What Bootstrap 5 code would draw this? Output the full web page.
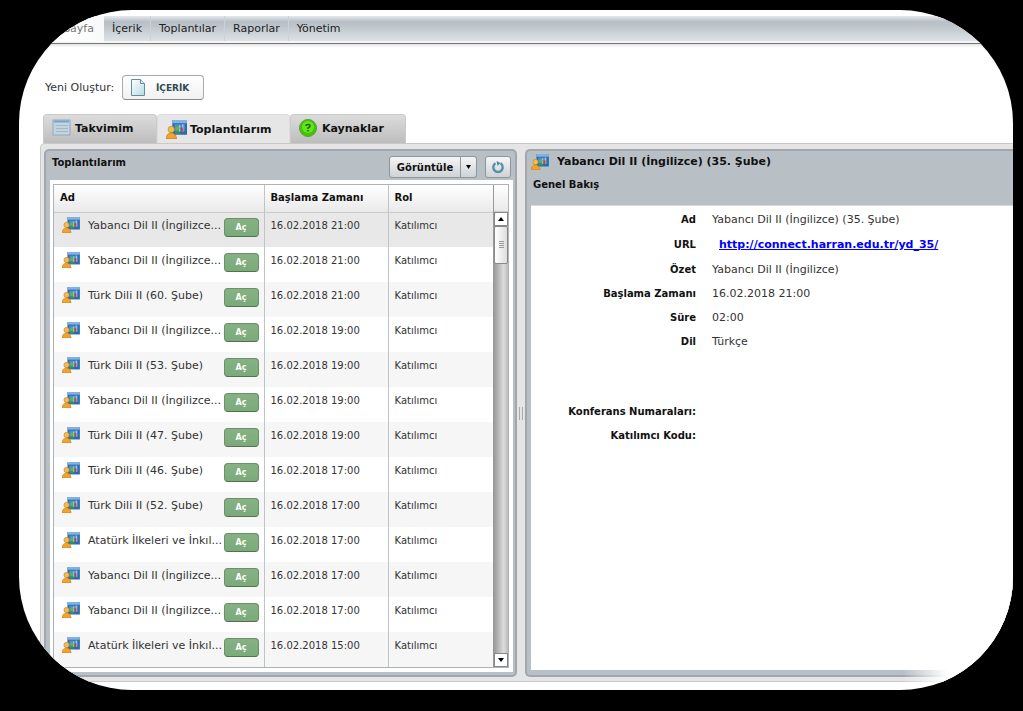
<!DOCTYPE html>
<html lang="tr">
<head>
<meta charset="utf-8">
<meta name="viewport" content="width=device-width, initial-scale=1">
<title>Toplantılarım</title>
<link href="https://cdn.jsdelivr.net/npm/bootstrap@5.3.0/dist/css/bootstrap.min.css" rel="stylesheet">
<style>
body{background:#000;font-family:Verdana,"DejaVu Sans",sans-serif;font-size:10px;line-height:16px;color:#333}
.frame{margin:10px 10px 20px 19px;border-radius:113px;background:#fff;overflow:hidden;padding-top:6px;padding-bottom:8px}
.topbar{height:28px;background:linear-gradient(#e6eaed,#b9c1c8 20%,#bcc4ca 35%,#dfe4e7 95%);border-bottom:1px solid #777;box-shadow:inset 0 -2px #f4f6f7,0 2px 2px #e6e6e6}
.topbar a{color:#222;text-decoration:none;font-size:11px;line-height:25px;padding:0 8px;border-right:1px solid #ccd2d6}
.topbar a.active{width:85px;background:linear-gradient(90deg,#fff 60%,#f8f9f9);text-align:right;padding-right:10px;color:#777;border:0}
.topbar a:last-child{border:0}
.create{padding:31px 26px 14px;font-size:11px;gap:8px}
.btn-create{width:82px;height:25px;padding:0 14px 0 8px;border:1px solid #aaa;border-bottom-color:#888;border-radius:4px;background:linear-gradient(#fff,#f1f1f1);font:bold 9px "DejaVu Sans",sans-serif;color:#2a4c55}
.tabs{margin-left:24px;height:29px}
.tabs button{height:29px;border:1px solid #cacaca;border-bottom:0;border-radius:4px 4px 0 0;background:linear-gradient(#dcdcdc,#bdbdbd);font:bold 11px "DejaVu Sans",sans-serif;color:#111;padding:0 0 2px 8px;gap:3px}
.tabs button.active{background:#e6e6e6;border-color:#ddd;padding-bottom:0}
.workspace{margin-left:21px;background:#e5e5e5;border:1px solid #c9c9c9;border-right:0;border-radius:5px 0 0 5px;padding:5px 0 4px 3px}
.pane{background:#b8c0c6;border:2px solid #a1a7ac;font-size:10px;color:#111}
.pane-list{width:473px;flex:none;border-radius:5px;padding:0 2px 3px 4px}
.pane-info{border-right:0;border-radius:5px 0 0 5px;padding:0 0 5px 4px;position:relative}
.pane-info::after{content:"";position:absolute;right:0;bottom:-8px;width:110px;height:15px;background:linear-gradient(90deg,transparent,#fff 40%)}
.pane h2{font-size:11px;line-height:16px;font-weight:bold;margin:0}
.pane .list-head h2{font-size:10px}
.list-head{height:29px;padding:1px 2px 0 2px}
.btn-pane{height:22px;border:1px solid #8f969b;border-radius:3px;background:linear-gradient(#f5f5f5,#cfd3d6);color:#111;font:bold 10px "DejaVu Sans",sans-serif;padding:0}
.listbox{background:#fff;padding:4px 4px 4px 3px}
.gridbox{border:1px solid #adb4b9}
.meetings{table-layout:fixed;margin:0;font-size:10px;color:#333;width:100%;border-collapse:collapse}
.meetings th{height:27px;padding:0 6px;background:linear-gradient(#fff,#e9e9e9);font-size:10px;color:#111;border-bottom:1px solid #ccc;vertical-align:middle}
.meetings th+th,.meetings td+td{border-left:1px solid #bfc4c7}
.meetings td{height:35px;padding:0 6px 8px;vertical-align:middle;white-space:nowrap}
.meetings tr:nth-child(odd) td{background:#f6f6f6}
.meetings tr:first-child td{background:#e8e8e8}
.meetings td:first-child{padding:0 5px 0 8px}
.meetings .title{width:136px;margin:0 0 8px 8px;font-size:11px}
.meetings .ic{margin-bottom:10px}
.btn-open{width:35px;height:19px;border:1px solid #6c8f6c;border-bottom-color:#54704f;border-radius:4px;background:linear-gradient(#86b184,#7bab7a);color:#fff;font:bold 8px/15px "DejaVu Sans",sans-serif;padding:0;margin-bottom:4px}
.scroller{width:15px;flex:none;border-left:1px solid #999}
.scroll-top{height:27px;background:linear-gradient(#fff,#e9e9e9);border-bottom:1px solid #ccc}
.scroll-track{background:linear-gradient(90deg,#999,#ddd 70%,#bbb)}
.scroller button{height:14px;width:100%;padding:0;border:1px solid #888;background:#fff;line-height:0}
.scroller .thumb{height:38px;border-radius:2px;background:linear-gradient(90deg,#fff,#ddd)}
.splitter{width:8px;flex:none}
.splitter span{width:4px;height:13px;border:solid #aaa;border-width:0 1px}
.info-head{padding:3px 0 0;height:54px}
.info-head .sub-title{font-size:10px;padding-left:2px;margin-top:7px}
.info-body{background:#fff;padding-top:2px;border-top:1px solid #d5dadd}
.facts{display:grid;grid-template-columns:165px 1fr;column-gap:16px;grid-auto-rows:24px;align-items:center;margin:0}
.overview{grid-template-rows:24px 26px}
.conference{margin-top:46px}
.facts dt{text-align:right;white-space:nowrap;color:#111}
.facts dd{margin:0;font-size:11px;color:#333}
.facts a{color:#00f;font-weight:bold;margin-left:7px}
</style>
</head>
<body>
<svg width="0" height="0" class="d-none">
<symbol id="meet" viewBox="0 0 20 18">
<path d="M6 0H20V14H6z" fill="#2f69ad"/><path d="M6 0H20V3H6z" fill="#80b2e4"/><path d="M8 4H18V11H8z" fill="#4d8dcc"/>
<path d="M13 5v6M16 4v7" stroke="#b9d4ef"/><path d="M14 7h2v4h-2z" fill="#b84836"/>
<circle cx="11" cy="8" r="2" fill="#5fb550"/><path d="M8 13q3-5 6 0z" fill="#3c993f"/>
<circle cx="5" cy="9" r="3" fill="#f2bd4e" stroke="#b9772a" stroke-width=".6"/><path d="M0 18q0-5 5-6q5 1 5 6z" fill="#f0a52a" stroke="#c0691a" stroke-width=".6"/>
</symbol>
</svg>
<div class="frame">
  <nav class="topbar d-flex align-items-start" aria-label="Ana menü">
    <a href="#" class="active">Sayfa</a><a href="#">İçerik</a><a href="#">Toplantılar</a><a href="#">Raporlar</a><a href="#">Yönetim</a>
  </nav>
  <div class="create d-flex align-items-center">
    <span>Yeni Oluştur:</span>
    <button type="button" class="btn-create d-flex align-items-center justify-content-between">
      <svg width="14" height="17" viewBox="0 0 14 17"><defs><linearGradient id="pg" x2="1" y2="1"><stop stop-color="#fff"/><stop offset="1" stop-color="#b5dce4"/></linearGradient></defs><path d="M.5.5H9.500L13.500 4.500V16.500H.5z" fill="url(#pg)" stroke="#648d98"/><path d="M9.500.5V4.500H13.500" fill="#d5ecf0" stroke="#648d98"/></svg>
      İÇERİK
    </button>
  </div>
  <div class="tabs d-flex" role="tablist">
    <button type="button" role="tab" class="d-flex align-items-center" style="width:114px"><svg width="20" height="18" viewBox="0 0 20 18"><rect x="1" y="1" width="17" height="15" fill="#c3d3df" stroke="#8eabc1"/><path d="M2 2.500h15" stroke="#77a5cb" stroke-width="2"/><path d="M4 6.500h12M4 9.500h12M4 12.500h12" stroke="#a5b8c6"/></svg>Takvimim</button>
    <button type="button" role="tab" class="active d-flex align-items-center" aria-selected="true" style="width:133px"><svg width="21" height="19"><use href="#meet"/></svg>Toplantılarım</button>
    <button type="button" role="tab" class="d-flex align-items-center" style="width:116px"><svg width="20" height="18" viewBox="0 0 20 18"><circle cx="9" cy="9" r="8.500" fill="#43c500" stroke="#599b3c"/><circle cx="9" cy="8" r="6" fill="#65e31c"/><path d="M7 7q0-1.500 2-1.500t2 1.500q0 1-2 2v1M9 11v1.500" fill="none" stroke="#1c6b00" stroke-width="1.500"/></svg>Kaynaklar</button>
  </div>
  <main class="workspace d-flex">
    <section class="pane pane-list">
      <div class="list-head d-flex">
        <h2 class="me-auto mt-1" style="line-height:14px">Toplantılarım</h2>
        <div class="d-flex mt-1">
          <button type="button" class="btn-pane rounded-end-0" style="width:72px">Görüntüle</button>
          <button type="button" class="btn-pane rounded-start-0 border-start-0 me-2" style="width:16px" aria-label="Seçenekler"><svg class="d-block mx-auto" width="5" height="4"><path d="M0 0H5L2.500 4z"/></svg></button>
          <button type="button" class="btn-pane" style="width:26px" aria-label="Yenile"><svg class="d-block mx-auto" width="14" height="14" viewBox="0 0 14 14"><path d="M4.500 3.300A4.700 4.700 0 1 0 9.500 3.300" fill="none" stroke="#5791a8" stroke-width="2.400"/><path d="M5.500 1L9.500 3L6.500 6z" fill="#4f8aa2"/></svg></button>
        </div>
      </div>
      <div class="listbox">
        <div class="gridbox d-flex">
          <table class="meetings">
            <colgroup><col style="width:210px"><col style="width:124px"><col></colgroup>
            <thead><tr><th>Ad</th><th>Başlama Zamanı</th><th>Rol</th></tr></thead>
            <tbody id="rows"></tbody>
          </table>
          <div class="scroller d-flex flex-column">
            <div class="scroll-top"></div>
            <div class="scroll-track flex-grow-1 d-flex flex-column">
              <button type="button" aria-label="Yukarı"><svg width="6" height="4"><path d="M0 4H6L3 0z"/></svg></button>
              <button type="button" class="thumb" aria-label="Kaydır"><svg width="5" height="8"><path d="M0 .5h5M0 2.500h5M0 4.500h5M0 6.500h5" stroke="#999"/></svg></button>
              <button type="button" class="mt-auto" aria-label="Aşağı"><svg width="6" height="4"><path d="M0 0H6L3 4z"/></svg></button>
            </div>
          </div>
        </div>
      </div>
    </section>
    <div class="splitter d-flex align-items-center justify-content-center"><span></span></div>
    <section class="pane pane-info flex-grow-1 d-flex flex-column">
      <div class="info-head">
        <div class="d-flex align-items-center"><svg width="18" height="16" class="me-2"><use href="#meet"/></svg><h2>Yabancı Dil II (İngilizce) (35. Şube)</h2></div>
        <h2 class="sub-title">Genel Bakış</h2>
      </div>
      <div class="info-body flex-grow-1">
        <dl class="facts overview">
          <dt>Ad</dt><dd>Yabancı Dil II (İngilizce) (35. Şube)</dd>
          <dt>URL</dt><dd><a href="#">http://connect.harran.edu.tr/yd_35/</a></dd>
          <dt>Özet</dt><dd>Yabancı Dil II (İngilizce)</dd>
          <dt>Başlama Zamanı</dt><dd>16.02.2018 21:00</dd>
          <dt>Süre</dt><dd>02:00</dd>
          <dt>Dil</dt><dd>Türkçe</dd>
        </dl>
        <dl class="facts conference">
          <dt>Konferans Numaraları:</dt><dd></dd>
          <dt>Katılımcı Kodu:</dt><dd></dd>
        </dl>
      </div>
    </section>
  </main>
</div>
<script>
const yd = "Yabancı Dil II (İngilizce...", at = "Atatürk İlkeleri ve İnkıl...";
const data = [[yd,21],[yd,21],["Türk Dili II (60. Şube)",21],[yd,19],["Türk Dili II (53. Şube)",19],[yd,19],["Türk Dili II (47. Şube)",19],["Türk Dili II (46. Şube)",17],["Türk Dili II (52. Şube)",17],[at,17],[yd,17],[yd,17],[at,15]];
document.getElementById("rows").innerHTML = data.map(([t,h]) => `<tr><td><div class="d-flex align-items-center"><svg class="ic flex-shrink-0" width="18" height="16"><use href="#meet"/></svg><span class="title">${t}</span><button type="button" class="btn-open">Aç</button></div></td><td>16.02.2018 ${h}:00</td><td>Katılımcı</td></tr>`).join("");
</script>
<script src="https://cdn.jsdelivr.net/npm/bootstrap@5.3.0/dist/js/bootstrap.bundle.min.js"></script>
</body>
</html>
